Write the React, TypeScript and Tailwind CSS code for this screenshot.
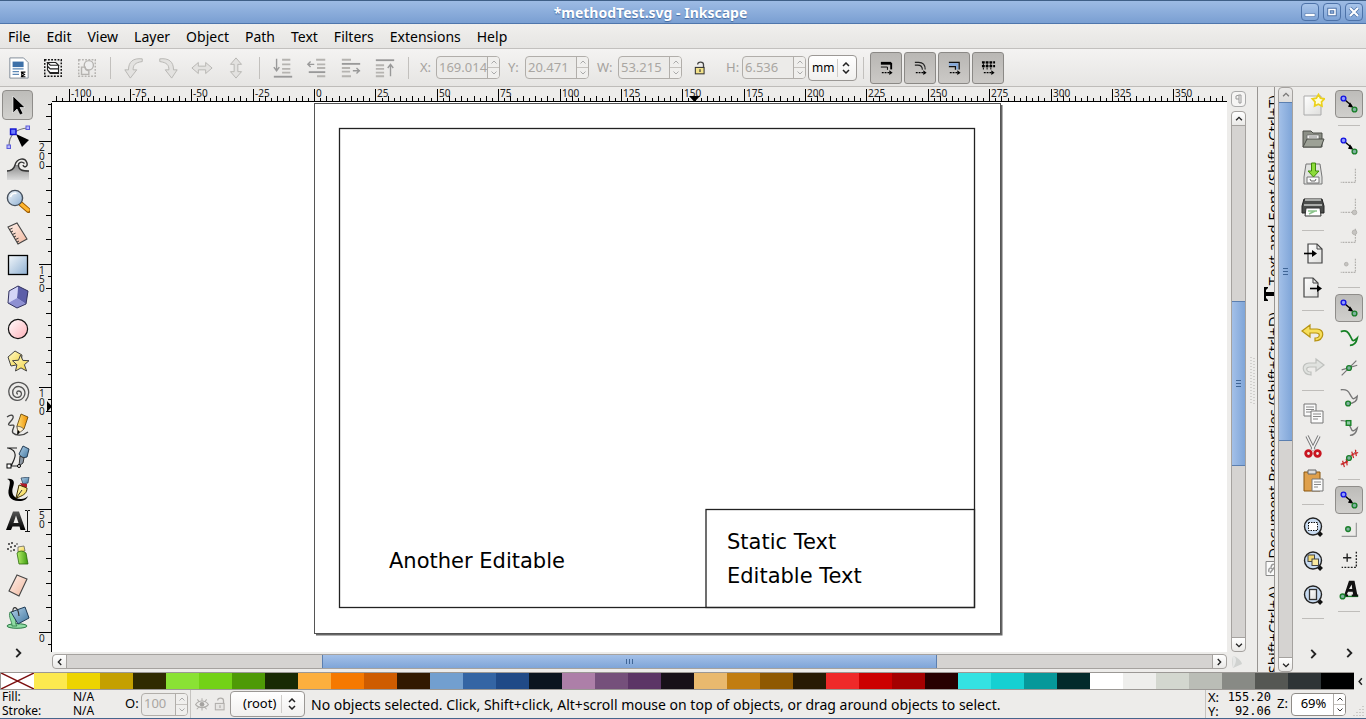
import React from "react";

type Box = { children?: React.ReactNode };

const Svg = ({ children, size = 24 }: Box & { size?: number }) => (
  <svg width={size} height={size} viewBox="0 0 24 24" fill="none" aria-hidden="true" className="shrink-0">
    {children}
  </svg>
);

/* ---------- gradients shared by the icons ---------- */

const Gradients = () => (
  <svg width="0" height="0" className="absolute" aria-hidden="true">
    <defs>
      <linearGradient id="blue" x1="0" y1="0" x2="1" y2="1">
        <stop offset="0" stopColor="#f2f7fb" />
        <stop offset="1" stopColor="#8fb0d2" />
      </linearGradient>
      <linearGradient id="steel" x1="0" y1="0" x2="1" y2="1">
        <stop offset="0" stopColor="#b5d3ea" />
        <stop offset="1" stopColor="#3f759f" />
      </linearGradient>
      <linearGradient id="pink" x1="0" y1="0" x2="1" y2="1">
        <stop offset="0" stopColor="#fff" />
        <stop offset="1" stopColor="#ffb0b8" />
      </linearGradient>
      <linearGradient id="peach" x1="0" y1="0" x2="1" y2="1">
        <stop offset="0" stopColor="#fff1ea" />
        <stop offset="1" stopColor="#f0b8a0" />
      </linearGradient>
      <linearGradient id="gold" x1="0" y1="0" x2="1" y2="1">
        <stop offset="0" stopColor="#fffbd0" />
        <stop offset="1" stopColor="#f3d23c" />
      </linearGradient>
      <linearGradient id="green" x1="0" y1="0" x2="1" y2="0">
        <stop offset="0" stopColor="#b6f06a" />
        <stop offset="1" stopColor="#3d9a10" />
      </linearGradient>
      <linearGradient id="wave" x1="0" y1="0" x2="0" y2="1">
        <stop offset="0" stopColor="#8a8a8a" />
        <stop offset="1" stopColor="#dcdcdc" />
      </linearGradient>
      <linearGradient id="paper" x1="0" y1="0" x2="1" y2="1">
        <stop offset="0" stopColor="#fff" />
        <stop offset="1" stopColor="#dededc" />
      </linearGradient>
      <linearGradient id="orange" x1="0" y1="0" x2="1" y2="0">
        <stop offset="0" stopColor="#ffe27a" />
        <stop offset="1" stopColor="#ee8f00" />
      </linearGradient>
      <linearGradient id="ink" x1="0" y1="0" x2="0" y2="1">
        <stop offset="0" stopColor="#555" />
        <stop offset="1" stopColor="#000" />
      </linearGradient>
    </defs>
  </svg>
);

/* ---------- toolbox ---------- */

const tools: [string, React.ReactNode][] = [
  ["Select", <path d="M7 3v17l4-4 3 6 3-1.500-3-6h5z" fill="#000" stroke="#fff" strokeWidth=".6" />],
  ["Edit nodes", <><path d="M3 21C3 10 9 4 22 3" stroke="#777" strokeWidth="1.200" /><path d="M10 9l13 6-7 7z" fill="#000" /><rect x="4.500" y="4" width="5.500" height="5.500" fill="#6d7dff" stroke="#1010d0" strokeWidth="1.400" /><rect x="20" y="1" width="3.500" height="3.500" fill="#b9b9ff" stroke="#5a5ad8" /><rect x="1" y="20" width="3.500" height="3.500" fill="#b9b9ff" stroke="#5a5ad8" /></>],
  ["Tweak", <><path d="M1 13c5 0 7-1 8-5h3c1 4 4 6 11 6v9H1z" fill="url(#wave)" /><path d="M1 14c5 0 7-2 8-6 2-7 10-8 12-2 1 4-3 5-4 2M23 14c-7 0-10-1-10.500-5S16 4 18.500 6.500" stroke="#333" strokeWidth="1.400" /></>],
  ["Zoom", <><path d="M15 15l7.500 6.500" stroke="#9b5a00" strokeWidth="5" strokeLinecap="round" /><path d="M15 15l7 6" stroke="#ffb52e" strokeWidth="3.200" strokeLinecap="round" /><circle cx="9" cy="9" r="7.600" fill="url(#blue)" stroke="#46505c" strokeWidth="1.400" /><path d="M4.500 8a5 5 0 0 1 6-3.500" stroke="#fff" strokeWidth="1.600" /></>],
  ["Measure", <><path d="M2 6l9-4 10 16-9 5z" fill="url(#peach)" stroke="#444" strokeWidth="1.100" /><path d="M3.500 8.500l3-1.300M5 11l2-1M6.500 13.500l3-1.300M8 16l2-1M9.500 18.500l3-1.300M11 21l2-1" stroke="#333" /></>],
  ["Rectangle", <rect x="2.500" y="2.500" width="19" height="19" fill="url(#blue)" stroke="#000" strokeWidth="1.300" />],
  ["3D box", <><path d="M12 1l10 5-2 13-9 4-9-5 1-12z" fill="#b9bbec" /><path d="M12 1l10 5-2 13-9-6z" fill="#5c5ea8" /><path d="M2 18l9-5 9 6-9 4z" fill="#8e90d2" /><path d="M12 1l-1 12-9 5 1-12z" fill="#d3d4f6" /><path d="M12 1l10 5-2 13-9 4-9-5 1-12z" stroke="#33335e" /></>],
  ["Ellipse", <circle cx="12" cy="12" r="9.600" fill="url(#pink)" stroke="#111" strokeWidth="1.200" />],
  ["Star", <><path d="M2 8l7-6 7 4-1 9-10 2z" fill="url(#gold)" stroke="#444" /><path d="M14.500 6l2.300 5.400 6.200.3-4.600 4 2.200 6.300-5.600-3.100-5.500 3.100 1.400-6.200-4.400-4.100 6-.5z" fill="url(#gold)" stroke="#444" /></>],
  ["Spiral", <path d="M12 13c-2 0-1.600-3 .7-3 3 0 3.600 4 1.300 5.600-3 2-7.300 0-7.300-4C6.700 7 10 5 13.500 5.600c5 .8 6.800 6.400 4.200 10.400C14.500 20.800 7.500 20 4.500 16 1.200 11 3 4.500 8 2.300 14-.3 21 3 22.400 9c.8 4-.4 8-2.900 11" stroke="#555" strokeWidth="1.300" />],
  ["Pencil", <><path d="M1 4c4-3 7-2 6 1s-6 6-4 7 5-1 5 1-3 5-1 7 9 4 15-1" stroke="#444" strokeWidth="1.300" /><path d="M15 1l7 3-4 12-6 4-1-7z" fill="url(#orange)" stroke="#5d3c00" strokeWidth=".8" /><path d="M11 13l4 1 3 2-6 5z" fill="#fff0cc" stroke="#333" strokeWidth=".6" /><path d="M12 17l2 2-3 3z" fill="#000" /></>],
  ["Bezier", <><path d="M1 3h10M2 3c12 3 6 12 3 18h8" stroke="#222" strokeWidth="1.200" /><path d="M17 1l6 3-2 8-5 1-3-4z" fill="url(#steel)" stroke="#223a52" /><path d="M14 11l4 2-1 5-4 3z" fill="#8d98a4" stroke="#333" /><rect x="1" y="19" width="4" height="4" fill="#fff" stroke="#000" /><circle cx="13" cy="21" r="1.500" fill="#fff" stroke="#000" /></>],
  ["Calligraphy", <><path d="M1 2c7-1 8 3 6 8s0 12 8 12c3 0 5-1 7-3-1 3-4 5-9 5C4 24 1 18 3 11c1-5 2-8-2-9z" fill="#000" /><path d="M15 1l8-1-1 6-5 1z" fill="url(#steel)" stroke="#223a52" strokeWidth=".7" /><path d="M14 6l7 1v3h-5z" fill="#b01c28" /><path d="M13 8l8 3c0 5-3 7-8 9l-3 1z" fill="url(#gold)" stroke="#3f3100" /><path d="M11 20l5-7" stroke="#333" /></>],
  ["Text", <><path d="M7 2.500h6L19.500 21h-5l-1-3.500h-7L5 21H0zM7.500 14h5L10 6.500z" fill="url(#ink)" fillRule="evenodd" /><path d="M19 1.500h2l.5.500.5-.5h2M21.500 2v20M19 22.500h5" stroke="#111" /></>],
  ["Spray", <><g fill="#333"><circle cx="3" cy="3" r="1" /><circle cx="6" cy="2" r="1" /><circle cx="5" cy="6" r="1" /><circle cx="9" cy="5" r="1" /><circle cx="2" cy="8" r="1" /><circle cx="8" cy="9" r="1" /><circle cx="11" cy="3" r=".8" /><circle cx="5" cy="10" r=".8" /></g><path d="M12 6l6-1 1 5-7 1z" fill="url(#gold)" stroke="#555" strokeWidth=".7" /><path d="M11 12q4-4 9 0l2 11h-9z" fill="url(#green)" stroke="#2b6b0a" strokeWidth=".8" /></>],
  ["Eraser", <path d="M11 2l10 4-8 17-10-5z" fill="url(#peach)" stroke="#444" strokeWidth="1.100" />],
  ["Fill", <><ellipse cx="11" cy="21" rx="10" ry="2.300" fill="#8fdca4" stroke="#2c7a46" /><path d="M4 7c-2 5 2 9 2 14h5c-3-4 0-7-3-13z" fill="#8fdca4" stroke="#2c7a46" strokeWidth=".8" /><path d="M5 7l14-5 4 11-11 6z" fill="url(#steel)" stroke="#1e3a55" /><path d="M7 7c-1-6 5-7 6 4" stroke="#333" strokeWidth="1.200" /></>],
];

const Chevron = ({ d = "M9 5l7 7-7 7", size = 14 }: { d?: string; size?: number }) => (
  <Svg size={size}><path d={d} stroke="#222" strokeWidth="3.200" /></Svg>
);

const Toolbox = () => (
  <aside className="flex w-9 shrink-0 flex-col items-start pt-0.5 pl-0.5">
    {tools.map(([name, icon], i) => (
      <button
        key={name}
        aria-label={name}
        className={
          i === 0
            ? "my-px flex h-[30px] w-[31px] shrink-0 items-center justify-center rounded border border-[#8f8d8a] bg-gradient-to-b from-[#bdbcb9] to-[#d2d1ce]"
            : "flex h-8 w-[31px] shrink-0 items-center justify-center"
        }
      >
        <Svg>{icon}</Svg>
      </button>
    ))}
    <button aria-label="More tools" className="flex h-10 w-[31px] shrink-0 items-center justify-center"><Chevron /></button>
  </aside>
);

/* ---------- control toolbar ---------- */

const Sep = () => <span className="mx-1.5 h-[22px] w-px shrink-0 bg-[#c2c0bd]" />;

const TbIcon = ({ name, children }: Box & { name: string }) => (
  <button aria-label={name} className="flex h-8 w-[34px] shrink-0 items-center justify-center"><Svg size={22}>{children}</Svg></button>
);

const Spin = ({ id, label, value, on = false, field, box }: { id: string; label: string; value: string; on?: boolean; field: string; box: string }) => (
  <div className="flex shrink-0 items-center">
    <label htmlFor={id} className={on ? `${field} text-black` : `${field} text-[#a5a29e]`}>{label}</label>
    <div className={`${box} flex h-[23px] items-stretch overflow-hidden rounded border ${on ? "border-[#8f8c88] bg-white" : "border-[#b1aeaa] bg-[#ecebe9]"}`}>
      <input id={id} defaultValue={value} disabled={!on} className={`min-w-0 flex-1 bg-transparent pl-0.5 outline-none ${on ? "text-center text-black" : "text-[#a9a6a2]"}`} />
      <div className={`flex w-3 flex-col border-l border-[#b1aeaa] ${on ? "bg-white" : "bg-[#f0efed]"}`}>
        <button aria-label={`Increase ${label}`} className="flex flex-1 items-center justify-center border-b border-[#c5c2be]">
          <svg width="6" height="4" viewBox="0 0 6 4"><path d="M.5 3.500L3 1l2.500 2.500" fill="none" stroke={on ? "#333" : "#aaa"} /></svg>
        </button>
        <button aria-label={`Decrease ${label}`} className="flex flex-1 items-center justify-center">
          <svg width="6" height="4" viewBox="0 0 6 4"><path d="M.5.5L3 3 5.500.5" fill="none" stroke={on ? "#333" : "#aaa"} /></svg>
        </button>
      </div>
    </div>
  </div>
);

const Combo = ({ label, value, cls }: { label: string; value: string; cls: string }) => (
  <div className={`${cls} grid h-[26px] shrink-0 items-center rounded border border-[#9b9895] bg-gradient-to-b from-white to-[#f1f0ee]`}>
    <select aria-label={label} className="col-start-1 row-start-1 h-full w-full appearance-none bg-transparent outline-none">
      <option>{value}</option>
    </select>
    <span className="pointer-events-none col-start-1 row-start-1 flex h-[18px] items-center justify-self-end border-l border-[#cfcdca]">
      <svg width="8" height="12" viewBox="0 0 8 12"><path d="M1 4l3-3 3 3M1 8l3 3 3-3" fill="none" stroke="#222" strokeWidth="1.500" /></svg>
    </span>
  </div>
);

const Lock = ({ muted = false }: { muted?: boolean }) => (
  <Svg size={14}>
    <path d="M8 6c0-6 10-5 10 0v5" stroke={muted ? "#b0aeab" : "#444"} strokeWidth="2.200" />
    <rect x="4" y="11" width="15" height="11" fill={muted ? "#e6e5e3" : "#f3e28a"} stroke={muted ? "#b0aeab" : "#333"} strokeWidth="1.800" />
    <path d="M12 14v5" stroke={muted ? "#b0aeab" : "#333"} strokeWidth="2" />
  </Svg>
);

const G = "#b5b3b0";

const Toggle = ({ name, children }: Box & { name: string }) => (
  <button aria-label={name} aria-pressed="true" className="flex h-8 w-8 shrink-0 items-center justify-center rounded-[3px] border border-[#8b8986] bg-gradient-to-b from-[#b9b7b4] to-[#cbc9c6]">
    <svg width="15" height="15" viewBox="0 0 16 16" fill="none" aria-hidden="true">
      {children}
      <path d="M3 13.500h9" stroke="#000" strokeWidth="1.300" strokeDasharray="2 1" />
      <path d="M11 11l3.500 2.500L11 16z" fill="#000" />
    </svg>
  </button>
);

const Toolbar = () => (
  <div className="flex h-[38px] shrink-0 items-center overflow-hidden border-b border-[#bebcb9] bg-gradient-to-b from-[#f4f3f2] to-[#e6e5e3] pl-0.5 text-[13px]">
    <TbIcon name="Select all"><path d="M2 1h15l5 5v17H2z" fill="#fff" stroke="#7b8794" /><path d="M5 5h12v6H5z" fill="#3d70a8" /><path d="M5 13h12M5 16h7M5 19h7" stroke="#5d88b5" strokeWidth="1.500" /><path d="M14 16h6v5h-6z" fill="#fff" /><path d="M14 16.500h5M14 21.500h5M15 17l3 2-3 2z" stroke="#000" strokeWidth="1.200" /></TbIcon>
    <TbIcon name="Select all in layers"><rect x="3" y="3" width="18" height="18" stroke="#111" strokeWidth="1.600" strokeDasharray="2 1.500" /><path d="M6 6h9l3 3H9zM6 6v4l3 3h9V9M6 10v4l3 3h9v-4M6 14l3 4h9v-3" fill="#fff" stroke="#222" strokeWidth="1.200" /></TbIcon>
    <TbIcon name="Deselect"><rect x="3" y="3" width="18" height="18" stroke={G} strokeWidth="1.600" strokeDasharray="2 1.500" /><circle cx="14" cy="9" r="5" fill="#eee" stroke={G} strokeWidth="1.500" /><path d="M6 11h4c0 3 2 4 4 4v4H6z" stroke={G} strokeWidth="1.500" /></TbIcon>
    <Sep />
    <TbIcon name="Rotate left"><path d="M21 2C11 1 6 5 6 14H2l6 9 7-9h-4c0-5 2-8 10-9z" fill="#e3e2e0" stroke={G} /></TbIcon>
    <TbIcon name="Rotate right"><path d="M3 2c10-1 15 3 15 12h4l-6 9-7-9h4c0-5-2-8-10-9z" fill="#e3e2e0" stroke={G} /></TbIcon>
    <TbIcon name="Flip horizontal"><path d="M1 12l7-6v4h8V6l7 6-7 6v-4H8v4z" fill="#e3e2e0" stroke={G} /></TbIcon>
    <TbIcon name="Flip vertical"><path d="M12 1l6 7h-4v8h4l-6 7-6-7h4V8H6z" fill="#e3e2e0" stroke={G} /></TbIcon>
    <Sep />
    <TbIcon name="Lower to bottom"><path d="M5 2v12M2 11l3 4 3-4" stroke="#999" strokeWidth="1.500" /><path d="M11 3h9M11 8h9M11 13h9M11 17h9" stroke={G} strokeWidth="2" /><path d="M2 21.500h20" stroke="#999" strokeWidth="2" /></TbIcon>
    <TbIcon name="Lower"><path d="M9 8H2M5 5L2 8l3 3" stroke="#999" strokeWidth="1.500" /><path d="M11 3h10M12 8h9M12 12h9M12 21h9" stroke={G} strokeWidth="2" /><path d="M3 16.500h18" stroke="#999" strokeWidth="2" /></TbIcon>
    <TbIcon name="Raise"><path d="M14 15h8M18 12l3 3-3 3" stroke="#999" strokeWidth="1.500" /><path d="M2 3h10M2 12h9M2 16h9M2 21h10" stroke={G} strokeWidth="2" /><path d="M2 7.500h20" stroke="#999" strokeWidth="2" /></TbIcon>
    <TbIcon name="Raise to top"><path d="M18 21V9M15 12l3-4 3 4" stroke="#999" strokeWidth="1.500" /><path d="M2 9h9M2 13h9M2 17h9M2 21h9" stroke={G} strokeWidth="2" /><path d="M2 3.500h20" stroke="#999" strokeWidth="2" /></TbIcon>
    <Sep />
    <Spin id="pos-x" label="X:" value="169.014" field="w-[21px] pl-[5px]" box="w-16" />
    <Spin id="pos-y" label="Y:" value="20.471" field="w-[25px] pl-2" box="w-16" />
    <Spin id="size-w" label="W:" value="53.215" field="w-[29px] pl-2" box="w-16" />
    <button aria-label="Lock ratio" className="flex h-6 w-9 items-center justify-center"><Lock /></button>
    <Spin id="size-h" label="H:" value="6.536" field="w-6 pl-2" box="w-16" />
    <Combo label="Unit" value="mm" cls="ml-0.5 w-[49px] text-[12px] [&>select]:pl-[3px] [&>span]:mr-1.5 [&>span]:pl-1" />
    <Sep />
    <div className="flex gap-0.5">
      <Toggle name="Scale stroke width"><path d="M2 3.500h11" stroke="#000" strokeWidth="3" /><path d="M13 3v7" stroke="#000" strokeWidth="2" /><path d="M2 7.500h7v3" stroke="#000" /></Toggle>
      <Toggle name="Scale corners"><path d="M2 2.500h4c5 0 7 3 7 7.500M2 5.500h3c4 0 5 2 5 5" stroke="#222" strokeWidth="1.200" /></Toggle>
      <Toggle name="Move gradients"><path d="M2 3.500h10V10h-2V6H2z" fill="#82a8dd" /><path d="M2 2.500h11V10M2 7h7v3.500" stroke="#111" strokeWidth="1.300" /></Toggle>
      <Toggle name="Move patterns"><path d="M1 2.500h14M1 6.500h14" stroke="#000" strokeWidth="2.500" strokeDasharray="3 1" /><path d="M2 4.500h12M2 9h12" stroke="#000" strokeWidth="2" strokeDasharray="1 3" /></Toggle>
    </div>
  </div>
);

/* ---------- rulers and canvas ---------- */

const UNIT = 2.455;

const HRuler = () => {
  const zero = 262;
  const ticks: React.ReactNode[] = [];
  for (let i = -42; i <= 148; i++) {
    const x = Math.round(zero + i * 2.5 * UNIT) + 0.5;
    const major = i % 10 === 0;
    ticks.push(<path key={i} d={`M${x} ${major ? 2 : i % 2 === 0 ? 9 : 11}V14`} stroke="#000" />);
    if (major) ticks.push(<text key={`t${i}`} x={x + 1.5} y="10" fontSize="10" fill="#222">{i * 2.5}</text>);
  }
  return (
    <svg width="100%" height="15" className="min-w-0 overflow-hidden" aria-label="Horizontal ruler">
      {ticks}
      <path d="M0 14.500H2000" stroke="#000" />
      <path d="M637 9h11l-5.500 6z" fill="#000" />
    </svg>
  );
};

const VRuler = () => {
  const zero = 530;
  const ticks: React.ReactNode[] = [];
  for (let i = -1; i <= 43; i++) {
    const y = Math.round(zero - i * 5 * UNIT) + 0.5;
    const major = i % 10 === 0;
    ticks.push(<path key={i} d={`M${major ? 3 : i % 2 === 0 ? 10 : 12} ${y}H16`} stroke="#000" />);
    if (major)
      String(i * 5).split("").forEach((c, k) =>
        ticks.push(<text key={`${i}-${k}`} x="3" y={y + 9 + k * 9} fontSize="10" fill="#222">{c}</text>),
      );
  }
  return (
    <svg width="16" height="100%" className="min-h-0 overflow-hidden" aria-label="Vertical ruler">
      {ticks}
      <path d="M15.500 1V2000" stroke="#000" />
      <path d="M11 299v11l5-5.500z" fill="#000" />
    </svg>
  );
};

const Canvas = () => (
  <main className="min-h-0 min-w-0 overflow-hidden bg-white">
    <svg width="1175" height="550" fill="none" fontFamily="'DejaVu Sans', sans-serif">
      <path d="M949.500 3v529.500H264" stroke="#666" strokeWidth="2" />
      <rect x="262.500" y="1.500" width="686" height="530" stroke="#555" />
      <rect x="287.500" y="26.500" width="635" height="479" stroke="#222" strokeWidth="1.300" />
      <rect x="654" y="407.500" width="268.500" height="98" stroke="#222" strokeWidth="1.300" />
      <g fill="#000" fontSize="21">
        <text x="337" y="466">Another Editable</text>
        <text x="675" y="447">Static Text</text>
        <text x="675" y="481">Editable Text</text>
      </g>
    </svg>
  </main>
);

const arrows = { up: "M5 15l7-7 7 7", down: "M5 9l7 7 7-7", left: "M15 5l-7 7 7 7", right: "M9 5l7 7-7 7" };

const ScrollBtn = ({ dir, cls }: { dir: keyof typeof arrows; cls: string }) => (
  <button aria-label={`Scroll ${dir}`} className={`${cls} flex shrink-0 items-center justify-center bg-gradient-to-b from-white to-[#eae9e7]`}>
    <Chevron d={arrows[dir]} size={10} />
  </button>
);

const vThumb = "flex flex-col items-center justify-center gap-0.5 border-y border-[#5b7fb0] bg-gradient-to-r from-[#a3c0e8] to-[#7fa5d8]";
const VGrip = () => <><i className="h-px w-[5px] bg-[#3f6596]" /><i className="h-px w-[5px] bg-[#3f6596]" /><i className="h-px w-[5px] bg-[#3f6596]" /></>;

const Editor = () => (
  <section className="grid min-w-0 flex-1 grid-cols-[16px_minmax(0,1fr)_20px] grid-rows-[15px_minmax(0,1fr)_20px]">
    <span />
    <HRuler />
    <div className="row-span-2 flex flex-col pt-1 pl-1">
      <button aria-label="Toggle guides" className="mb-1 flex h-4 w-[15px] items-center justify-center rounded border border-[#aaa] bg-[#f6f5f4]">
        <svg width="9" height="10" viewBox="0 0 9 10"><path d="M2 2l3-1v8M2 2v3h3M5 1h2v8H5" fill="none" stroke="#999" /></svg>
      </button>
      <div className="flex w-[15px] flex-1 flex-col rounded border border-[#a5a29f] bg-[#d5d3d1]">
        <ScrollBtn dir="up" cls="h-3.5 rounded-t border-b border-[#a5a29f]" />
        <span className="flex-[176]" />
        <div className={`flex-[163] ${vThumb}`}><VGrip /></div>
        <span className="flex-[172]" />
        <ScrollBtn dir="down" cls="h-3.5 rounded-b border-t border-[#a5a29f]" />
      </div>
    </div>
    <VRuler />
    <Canvas />
    <span />
    <div className="mt-0.5 flex h-[15px] rounded border border-[#a5a29f] bg-[#d5d3d1]">
      <ScrollBtn dir="left" cls="w-3.5 rounded-l border-r border-[#a5a29f]" />
      <span className="flex-[255]" />
      <div className="flex flex-[615] items-center justify-center gap-0.5 border-x border-[#5b7fb0] bg-gradient-to-b from-[#a3c0e8] to-[#7fa5d8]">
        <i className="h-[5px] w-px bg-[#3f6596]" /><i className="h-[5px] w-px bg-[#3f6596]" /><i className="h-[5px] w-px bg-[#3f6596]" />
      </div>
      <span className="flex-[275]" />
      <ScrollBtn dir="right" cls="w-3.5 rounded-r border-l border-[#a5a29f]" />
    </div>
    <button aria-label="Color-managed view" className="flex items-center justify-center">
      <svg width="12" height="14" viewBox="0 0 12 14"><path d="M2 1c4 1 8 4 9 8l-9 4c-1-4-1-8 0-12z" fill="#d0d2d0" /><path d="M2 1c4 1 4 6 0 12z" fill="#e6e7e6" /></svg>
    </button>
  </section>
);

/* ---------- docked dialogs ---------- */

const DockTab = ({ label, icon }: { label: string; icon?: React.ReactNode }) => (
  <button className="flex shrink-0 flex-col items-start gap-0.5 overflow-hidden pl-[5px] font-['Open_Sans',sans-serif] text-[15px] leading-5 whitespace-nowrap">
    <span className="rotate-180 [writing-mode:vertical-rl]">{label}</span>
    {icon}
  </button>
);

const Dock = () => (
  <aside className="flex shrink-0">
    <div className="flex w-2.5 items-center justify-center">
      <svg width="5" height="48"><path d="M1 1v46M4 2v46" stroke="#b5b3b0" strokeDasharray="1 2" /></svg>
    </div>
    <div className="mr-[3px] flex w-[18px] flex-col gap-2.5 overflow-hidden border border-y-0 border-[#989592] pt-2">
      <DockTab
        label="Text and Font (Shift+Ctrl+T)"
        icon={<svg width="12" height="15" viewBox="0 0 12 15" className="ml-px"><path d="M0 0h4v1L2 3v2h10v4H2v2l2 2v1H0z" fill="#000" /></svg>}
      />
      <DockTab
        label="Document Properties (Shift+Ctrl+D)"
        icon={<svg width="14" height="15" viewBox="0 0 14 15" className="ml-0.5"><path d="M1 .5h13v14H1z" fill="#fafafa" stroke="#888" /><path d="M4 11c-1-4 2-5 3-3M6 6c1-4 5-3 4 0M5 12l6-8" fill="none" stroke="#999" strokeWidth="1.500" /></svg>}
      />
      <DockTab label="(Shift+Ctrl+A)" />
    </div>
    <div className="flex w-[15px] flex-col rounded border border-[#a5a29f] bg-[#d5d3d1]">
      <ScrollBtn dir="up" cls="h-3.5 rounded-t opacity-50" />
      <div className={`flex-[339] ${vThumb}`}><VGrip /></div>
      <span className="flex-[217]" />
      <ScrollBtn dir="down" cls="h-3.5 rounded-b border-t border-[#a5a29f]" />
    </div>
  </aside>
);

/* ---------- command bar ---------- */

const HSep = () => <span className="flex h-3 w-[22px] shrink-0 items-center"><i className="h-px w-full bg-[#bfbdba]" /></span>;

const doc = <path d="M7 3h9l5 5v14H7z" fill="url(#paper)" stroke="#444" strokeWidth="1.200" />;
const lens = <><path d="M17 17l3.500 3.500" stroke="#111" strokeWidth="4" /><circle cx="12" cy="11.500" r="8.500" fill="#c9dcf2" stroke="#222" strokeWidth="1.400" /></>;

const commands: ([string, React.ReactNode] | null)[] = [
  ["New", <><path d="M3 3h17v19H3z" fill="url(#paper)" stroke="#aaa" /><path d="M17.500 1.500l2 3.700 4 .7-3 3 .5 4.100-3.700-1.800-3.700 1.800.5-4.100-2.800-3 4-.7z" fill="#fffdd8" stroke="#ecd11c" strokeWidth="1.700" /></>],
  ["Open", <><path d="M2 4h8l2 2h9v14H2z" fill="#8c8f86" stroke="#4c4f49" /><path d="M6 8h12v9H6z" fill="#f2f2f0" stroke="#666" strokeWidth=".7" /><path d="M8 10h8" stroke="#888" /><path d="M6 12h17l-3 8H2z" fill="#9da196" stroke="#4c4f49" /></>],
  ["Save", <><path d="M5 3h14l2 13v7H3v-7z" fill="#e2e3e1" stroke="#777" /><path d="M6 16h12v6H6z" fill="#fafafa" stroke="#777" /><path d="M9 18l1 2h4l1-2" stroke="#666" /><path d="M10.500 2h4v8H18l-5.500 6L7 10h3.500z" fill="#8ddb3b" stroke="#3f8b08" /></>],
  ["Print", <><path d="M3 4h18l2 7v7H1v-7z" fill="#4a4c4a" stroke="#222" /><path d="M4 5h16M3 10h18" stroke="#a9aba8" strokeWidth="2" /><path d="M5 13h14l1 8H4z" fill="#fff" stroke="#333" /><path d="M7 16h9M8 19l6-3" stroke="#8bc48b" strokeWidth="1.500" /></>],
  null,
  ["Import", <>{doc}<path d="M16 3v5h5" stroke="#444" /><path d="M3 12.500h9" stroke="#000" strokeWidth="1.600" /><path d="M11 9l5 3.500-5 3.500z" fill="#000" /></>],
  ["Export", <><path d="M3 3h9l5 5v14H3z" fill="url(#paper)" stroke="#444" strokeWidth="1.200" /><path d="M12 3v5h5" stroke="#444" /><path d="M9 13.500h9" stroke="#000" strokeWidth="1.600" /><path d="M16 10l5 3.500-5 3.500z" fill="#000" /></>],
  null,
  ["Undo", <path d="M1 10l8-6v4h7c8 0 8 11-2 12v-3c5 0 6-5 1-5H9v4z" fill="#f7df5c" stroke="#b79311" strokeWidth="1.200" />],
  ["Redo", <path d="M23 10l-8-6v4H8c-8 0-8 11 2 12v-3c-5 0-6-5-1-5h6v4z" fill="#e0e2df" stroke="#bfc1be" strokeWidth="1.200" />],
  null,
  ["Copy", <><path d="M3 3h12v12H3z" fill="#fbfbfb" stroke="#777" /><path d="M5 6h8M5 8.500h8M5 11h5" stroke="#888" /><path d="M10 10h12v12H10z" fill="#fbfbfb" stroke="#777" /><path d="M12 13h8M12 15.500h8M12 18h5" stroke="#888" /></>],
  ["Cut", <><path d="M6 1l7 14M18 1l-7 14" stroke="#777" strokeWidth="3.400" /><path d="M6 1l7 14M18 1l-7 14" stroke="#f2f2f2" strokeWidth="1.600" /><circle cx="7.500" cy="18.500" r="2.800" stroke="#c81520" strokeWidth="2.800" /><circle cx="16.500" cy="18.500" r="2.800" stroke="#c81520" strokeWidth="2.800" /></>],
  ["Paste", <><path d="M3 3h16v19H3z" fill="#dfa04c" stroke="#8a560f" /><path d="M7 1h8v4H7z" fill="#ddd" stroke="#666" /><path d="M11 10h11v12H11z" fill="#fbfbfb" stroke="#777" /><path d="M13 13h7M13 15.500h7M13 18h4" stroke="#888" /></>],
  null,
  ["Zoom selection", <>{lens}<rect x="7.500" y="7.500" width="9" height="8" fill="#fff" stroke="#111" strokeDasharray="1.500 1" /></>],
  ["Zoom drawing", <>{lens}<rect x="7" y="6" width="6.500" height="6.500" fill="#f5da72" stroke="#444" /><rect x="11" y="10" width="6.500" height="6.500" fill="#f9e9a0" stroke="#444" /></>],
  ["Zoom page", <>{lens}<rect x="8.500" y="6.500" width="7" height="10" fill="url(#paper)" stroke="#333" strokeWidth="1.300" /></>],
  null,
];

const CommandBar = () => (
  <nav className="ml-0.5 flex w-9 shrink-0 flex-col items-center pt-px" aria-label="Commands">
    {commands.map((c, i) =>
      c ? (
        <button key={c[0]} aria-label={c[0]} className="flex h-[34px] w-9 shrink-0 items-center justify-center"><Svg>{c[1]}</Svg></button>
      ) : (
        <HSep key={i} />
      ),
    )}
    <button aria-label="More commands" className="mt-3.5 flex h-8 w-9 items-center justify-center"><Chevron /></button>
  </nav>
);

/* ---------- snap bar ---------- */

const Node = ({ x, y, blue = false }: { x: number; y: number; blue?: boolean }) => (
  <circle cx={x} cy={y} r="2.600" fill={blue ? "#8f9bff" : "#7fb3a0"} stroke={blue ? "#1414e0" : "#1b7f2a"} strokeWidth="1.500" />
);
const link = <><path d="M8 8l7 6" stroke="#000" strokeWidth="1.500" /><path d="M11 15l2-5 4 6z" fill="#000" /><Node x={6} y={6} blue /><Node x={18} y={18} /></>;
const L = <path d="M19 4v15H3" stroke="#b3b1ae" strokeWidth="1.300" strokeDasharray="2 1" />;

const snaps: ([string, React.ReactNode, boolean?] | null)[] = [
  ["Snap", link, true],
  null,
  ["Snap bounding box", link],
  ["Snap edges", L],
  ["Snap corners", <>{L}<circle cx="18" cy="19" r="2.500" fill="#c6c4c1" stroke="#b3b1ae" /></>],
  ["Snap edge midpoints", <>{L}<circle cx="18" cy="8" r="2.500" fill="#c6c4c1" stroke="#b3b1ae" /></>],
  ["Snap centers", <>{L}<circle cx="9" cy="10" r="2" fill="#c6c4c1" stroke="#b3b1ae" /></>],
  null,
  ["Snap nodes", link, true],
  ["Snap paths", <path d="M3 5c8-3 9 3 12 8 1 3 3 2 6-1-1 5-3 8-8 8" stroke="#158024" strokeWidth="1.900" />],
  ["Snap intersections", <><path d="M4 20L20 4M4 14l17-5" stroke="#777" strokeWidth="1.300" /><Node x={12} y={12} /></>],
  ["Snap cusp nodes", <><path d="M3 3c9-1 9 4 12 8 1 3 3 2 6-1 0 5-3 8-10 8" stroke="#777" strokeWidth="1.500" /><Node x={11} y={18} /></>],
  ["Snap smooth nodes", <><path d="M3 4c9-1 9 5 12 10 1 2 3 1 6-2-1 5-3 8-8 8" stroke="#777" strokeWidth="1.500" /><rect x="9" y="4" width="5" height="5" fill="#8fc7a5" stroke="#158024" strokeWidth="1.500" /></>],
  ["Snap line midpoints", <><path d="M4 20L20 4" stroke="#888" /><path d="M5 15l2 7M9 13l1 7M15 5l2 7M19 3l1 7M3 19l8-3M14 9l8-3" stroke="#c22" strokeWidth="1.300" /><Node x={12} y={12} /></>],
  null,
  ["Snap others", link, true],
  ["Snap object centers", <><path d="M20 4v15H4" stroke="#999" strokeWidth="1.300" /><Node x={11} y={11} /></>],
  ["Snap rotation centers", <><path d="M20 3v17H4" stroke="#222" strokeWidth="1.500" strokeDasharray="2 1.500" /><path d="M10 5v9M5.500 9.500h9" stroke="#222" strokeWidth="1.500" /></>],
  ["Snap text baselines", <><path d="M4 19h18" stroke="#158024" strokeWidth="1.500" /><path d="M12 2h6l3 15h1v2h-7v-2h1.500l-.5-3H11l-1.500 3H11v2H5v-2h2zM12 11h3.500L15 6z" fill="#111" fillRule="evenodd" /><Node x={5} y={19} /></>],
  null,
];

const SnapBar = () => (
  <nav className="flex w-[35px] shrink-0 flex-col items-center pt-0.5" aria-label="Snapping">
    {snaps.map((s, i) =>
      s ? (
        <button
          key={s[0]}
          aria-label={s[0]}
          className={
            s[2]
              ? "my-px flex h-7 w-7 shrink-0 items-center justify-center rounded border border-[#8f8d8a] bg-gradient-to-b from-[#bdbcb9] to-[#d0cfcc]"
              : "flex h-[30px] w-7 shrink-0 items-center justify-center"
          }
        >
          <Svg size={22}>{s[1]}</Svg>
        </button>
      ) : (
        <HSep key={i} />
      ),
    )}
    <button aria-label="More snapping" className="mt-5 flex h-8 w-7 items-center justify-center"><Chevron /></button>
  </nav>
);

/* ---------- palette and status bar ---------- */

const colors = [
  "#fce94f", "#edd400", "#c4a000", "#302b00", "#8ae234", "#73d216", "#4e9a06", "#182a04",
  "#fcaf3e", "#f57900", "#ce5c00", "#321900", "#729fcf", "#3465a4", "#204a87", "#0b151f",
  "#ad7fa8", "#75507b", "#5c3566", "#171018", "#e9b96e", "#c17d11", "#8f5902", "#271a04",
  "#ef2929", "#cc0000", "#a40000", "#270000", "#34e2e2", "#16d0d2", "#06989a", "#032a2b",
  "#ffffff", "#eeeeec", "#d3d7cf", "#babdb6", "#888a85", "#555753", "#2e3436", "#000000",
];

const Palette = () => (
  <div className="flex h-[18px] shrink-0">
    <div className="flex flex-1 border-y border-l border-[#9b9895]">
      <button aria-label="None" className="flex-1 bg-white">
        <svg width="100%" height="16" viewBox="0 0 33 16" preserveAspectRatio="none" className="block"><path d="M0 0l33 16M33 0L0 16" stroke="#7c0f0f" strokeWidth="1.500" /></svg>
      </button>
      {colors.map((c) => <button key={c} aria-label={c} className="flex-1" style={{ backgroundColor: c }} />)}
    </div>
    <button aria-label="Palette menu" className="flex w-3 items-center justify-center"><Chevron d="M15 5l-6 7 6 7" size={11} /></button>
  </div>
);

const StatusBar = () => (
  <footer className="flex h-[29px] shrink-0 items-center border-b border-[#47658c] text-[13px]">
    <dl className="grid w-[123px] shrink-0 grid-cols-[71px_1fr] pl-0.5 text-[12px] leading-[14px]">
      <dt>Fill:</dt><dd>N/A</dd>
      <dt>Stroke:</dt><dd>N/A</dd>
    </dl>
    <div className="[&_label]:text-black">
      <Spin id="opacity" label="O:" value="100" field="w-[18px] pl-0.5" box="w-[47px]" />
    </div>
    <span className="mr-1 ml-0.5 h-full w-px shrink-0 bg-[#c5c3c0]" />
    <button aria-label="Toggle layer visibility" className="shrink-0">
      <Svg size={14}><path d="M1 13c6-8 16-8 22 0-6 7-16 7-22 0zM4 4l3 4M12 2v4M20 4l-3 4M3 21l3-3M12 23v-4M20 21l-3-3" stroke="#b0aeab" strokeWidth="1.800" /><circle cx="12" cy="12.500" r="4" fill="#a5a3a0" /></Svg>
    </button>
    <button aria-label="Lock layer" className="mr-[3px] ml-1 shrink-0"><Lock muted /></button>
    <Combo label="Layer" value="(root)" cls="w-[75px] [&>select]:pl-3 [&>span]:mr-2 [&>span]:pl-1.5" />
    <p className="min-w-0 flex-1 overflow-hidden pl-1.5 text-[14px] whitespace-nowrap">
      No objects selected. Click, Shift+click, Alt+scroll mouse on top of objects, or drag around objects to select.
    </p>
    <dl className="grid h-full w-[66px] shrink-0 grid-cols-[auto_1fr] content-center border-l border-[#c5c3c0] pl-0.5 leading-[14px]">
      <dt>X:</dt><dd className="text-right font-['DejaVu_Sans_Mono',monospace] text-[12px]">155.20</dd>
      <dt>Y:</dt><dd className="text-right font-['DejaVu_Sans_Mono',monospace] text-[12px]">92.06</dd>
    </dl>
    <Spin id="zoom" label="Z:" value="69%" on field="w-5 pl-1.5" box="w-[55px]" />
    <svg width="20" height="28" viewBox="0 0 20 28" className="shrink-0"><path d="M17 16v1M14 19v1M17 19v1M11 22v1M14 22v1M17 22v1M8 25v1M11 25v1M14 25v1M17 25v1" stroke="#aaa7a3" /></svg>
  </footer>
);

const WinButton = ({ name, children }: Box & { name: string }) => (
  <button aria-label={name} className="flex h-[18px] w-[18px] items-center justify-center rounded border border-[#4d72a8] bg-gradient-to-b from-[#a9c5ea] to-[#7ea3d6]">
    <svg width="12" height="12" viewBox="0 0 12 12" fill="none">{children}</svg>
  </button>
);

export default function App() {
  return (
    <div className="flex h-screen flex-col overflow-hidden bg-[#edecea] font-['Noto_Sans','Open_Sans',sans-serif] text-black">
      <Gradients />
      <header className="flex h-6 shrink-0 items-center border-t border-b border-t-[#3f5f87] border-b-[#4f76ac] bg-gradient-to-b from-[#9dbbe4] to-[#7a9fd2] pr-[3px]">
        <h1 className="flex-1 pt-px text-center text-[14px] leading-5 font-bold text-white [text-shadow:0_1px_1px_#3f679e]">*methodTest.svg - Inkscape</h1>
        <div className="flex gap-1">
          <WinButton name="Minimize"><path d="M1 7.500h10v3H1z" fill="#fff" stroke="#4d72a8" strokeWidth=".6" /></WinButton>
          <WinButton name="Maximize"><path d="M3 3.500h6v5H3z" stroke="#4d72a8" strokeWidth="3.400" /><path d="M3 3.500h6v5H3z" stroke="#fff" strokeWidth="1.500" /></WinButton>
          <WinButton name="Close"><path d="M2 2l8 8M10 2l-8 8" stroke="#4d72a8" strokeWidth="3.600" /><path d="M2 2l8 8M10 2l-8 8" stroke="#fff" strokeWidth="2.200" /></WinButton>
        </div>
      </header>
      <nav className="flex h-[25px] shrink-0 items-center gap-4 border-b border-[#c2c0be] bg-gradient-to-b from-[#f0efed] to-[#e6e5e3] pl-2 text-[14px]">
        {["File", "Edit", "View", "Layer", "Object", "Path", "Text", "Filters", "Extensions", "Help"].map((m) => <button key={m}>{m}</button>)}
      </nav>
      <Toolbar />
      <div className="flex min-h-0 flex-1">
        <Toolbox />
        <Editor />
        <Dock />
        <CommandBar />
        <SnapBar />
      </div>
      <Palette />
      <StatusBar />
    </div>
  );
}
